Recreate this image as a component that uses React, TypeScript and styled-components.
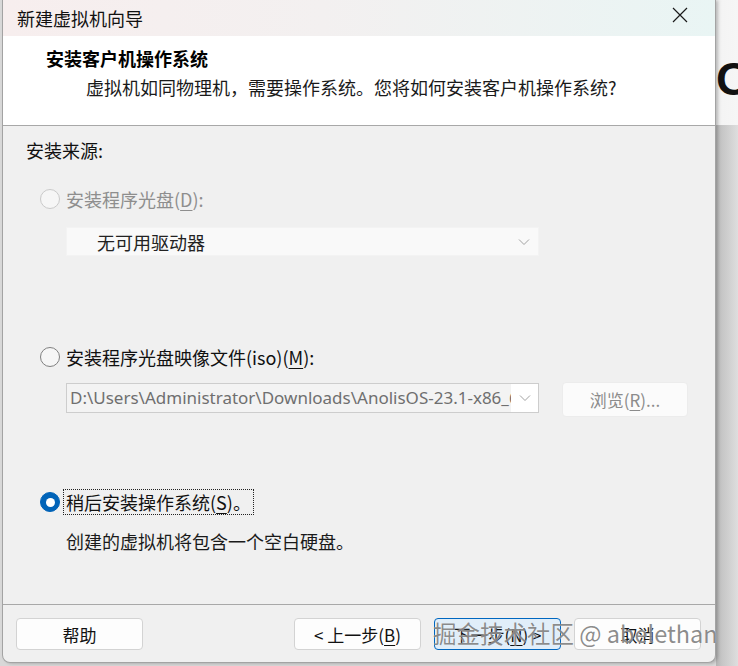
import React from "react";
import styled, { createGlobalStyle } from "styled-components";

const Global = createGlobalStyle`
  html, body { margin: 0; padding: 0; }
  body {
    width: 738px; height: 666px; overflow: hidden; background: #d6d6d6;
    font-family: "Noto Sans CJK SC", "Noto Sans", sans-serif;
  }
`;

const Desktop = styled.div`
  display: flex;
  width: 738px;
  height: 666px;
  overflow: hidden;
  position: relative;
  background: #d8d8d8;
`;

const Window = styled.div`
  position: relative;
  flex: none;
  width: 714px;
  height: 663px;
  margin-left: 2px;
  box-sizing: border-box;
  border: 1px solid #a3a3a3;
  border-top: none;
  border-radius: 0 0 8px 8px;
  display: flex;
  flex-direction: column;
  overflow: hidden;
  background: #f0f0f0;
  box-shadow: 2px 1px 3px rgba(0, 0, 0, 0.18);
  z-index: 1;
`;

const TitleBar = styled.div`
  height: 36px;
  flex: none;
  display: flex;
  align-items: center;
  padding-left: 14px;
  background: linear-gradient(90deg, #f7eeee 0%, #f3f0f0 45%, #e9f5f4 100%);
  font-size: 18px;
  color: #111;
`;

const TitleText = styled.div`
  flex: 1;
  line-height: 36px;
`;

const CloseButton = styled.div`
  width: 46px;
  height: 30px;
  margin-right: 12px;
  display: flex;
  align-items: center;
  justify-content: center;
  margin-top: -6px;
`;

const Header = styled.div`
  height: 90px;
  flex: none;
  box-sizing: border-box;
  background: #ffffff;
  border-bottom: 1px solid #a8a8a8;
  padding: 9px 0 0 43px;
`;

const HeaderTitle = styled.div`
  font-size: 18px;
  font-weight: 700;
  line-height: 26px;
  color: #000;
`;

const HeaderSub = styled.div`
  font-size: 18px;
  line-height: 26px;
  margin: 3px 0 0 40px;
  color: #1a1a1a;
`;

const Body = styled.div`
  flex: 1;
  padding: 12px 0 0 23px;
  display: flex;
  flex-direction: column;
  align-items: flex-start;
`;

const SectionLabel = styled.div`
  font-size: 18px;
  line-height: 24px;
  color: #111;
`;

const RadioRow = styled.div<{ $top: number }>`
  display: flex;
  align-items: center;
  gap: 6px;
  margin: ${(p) => p.$top}px 0 0 14px;
  height: 24px;
`;

const RadioCircle = styled.div<{ $state: "disabled" | "off" | "on" }>`
  width: 20px;
  height: 20px;
  box-sizing: border-box;
  border-radius: 50%;
  display: flex;
  align-items: center;
  justify-content: center;
  border: 1px solid
    ${(p) => (p.$state === "disabled" ? "#cacaca" : p.$state === "off" ? "#808080" : "#0063b8")};
  background: ${(p) => (p.$state === "on" ? "#0063b8" : "#f6f6f6")};
  &::after {
    content: "";
    display: ${(p) => (p.$state === "on" ? "block" : "none")};
    width: 9px;
    height: 9px;
    border-radius: 50%;
    background: #fff;
  }
`;

const RadioLabel = styled.div<{ $disabled?: boolean; $focused?: boolean }>`
  font-size: 18px;
  line-height: 24px;
  color: ${(p) => (p.$disabled ? "#8e8e8e" : "#111")};
  padding: 0 2px;
  margin-left: -2px;
  outline: ${(p) => (p.$focused ? "1px dotted #222" : "none")};
  outline-offset: 0;
  u {
    text-underline-offset: 3px;
  }
`;

const SelectBox = styled.div`
  margin: 16px 0 0 40px;
  width: 473px;
  height: 29px;
  box-sizing: border-box;
  background: #f9f9f9;
  border: 1px solid #f3f3f3;
  display: flex;
  align-items: center;
  padding: 0 8px 0 30px;
  font-size: 18px;
  color: #222;
`;

const SelectText = styled.div`
  flex: 1;
`;

const InputRow = styled.div`
  margin: 13px 0 0 40px;
  height: 35px;
  display: flex;
  align-items: center;
  gap: 23px;
`;

const PathCombo = styled.div`
  width: 473px;
  height: 30px;
  box-sizing: border-box;
  border: 1px solid #cdcdcd;
  background: #f3f3f3;
  display: flex;
  align-items: stretch;
  margin-top: -3px;
`;

const PathText = styled.div`
  flex: 1;
  overflow: hidden;
  white-space: nowrap;
  padding-left: 3px;
  font-family: "Noto Sans", "Open Sans", sans-serif;
  font-size: 17px;
  line-height: 28px;
  color: #6f6f6f;
`;

const ChevronBox = styled.div<{ $bg?: string }>`
  width: 27px;
  flex: none;
  display: flex;
  align-items: center;
  justify-content: center;
  background: ${(p) => p.$bg || "transparent"};
`;

const BrowseButton = styled.div`
  width: 126px;
  height: 35px;
  box-sizing: border-box;
  border: 1px solid #ececec;
  border-radius: 4px;
  background: #fbfbfb;
  display: flex;
  align-items: center;
  justify-content: center;
  font-size: 17px;
  color: #8c8c8c;
  u {
    text-underline-offset: 3px;
  }
`;

const Description = styled.div`
  margin: 15px 0 0 40px;
  font-size: 18px;
  line-height: 24px;
  color: #1a1a1a;
`;

const Footer = styled.div`
  height: 58px;
  flex: none;
  box-sizing: border-box;
  border-top: 1px solid #a8a8a8;
  padding: 13px 14px 0 13px;
  display: flex;
  align-items: flex-start;
`;

const Spacer = styled.div`
  flex: 1;
`;

const ButtonGroup = styled.div`
  display: flex;
  gap: 13px;
`;

const Button = styled.div<{ $primary?: boolean }>`
  width: 127px;
  height: 32px;
  box-sizing: border-box;
  border-radius: 4px;
  border: 1px solid ${(p) => (p.$primary ? "#0067c0" : "#d3d3d3")};
  background: ${(p) => (p.$primary ? "#e1eef9" : "#fdfdfd")};
  display: flex;
  align-items: center;
  justify-content: center;
  font-size: 17px;
  color: #111;
  u {
    text-underline-offset: 3px;
  }
`;

const Watermark = styled.div`
  position: absolute;
  left: 433px;
  top: 617px;
  font-family: "Noto Sans CJK SC", "Noto Sans", sans-serif;
  font-size: 23.5px;
  line-height: 32px;
  color: rgba(95, 95, 95, 0.72);
  text-shadow: 0 0 1px rgba(255, 255, 255, 0.9);
  white-space: nowrap;
  letter-spacing: 0;
  z-index: 3;
  pointer-events: none;
`;

const SideStrip = styled.div`
  flex: 1;
  display: flex;
  flex-direction: column;
  overflow: hidden;
`;

const SideTop = styled.div`
  height: 125px;
  flex: none;
  background: linear-gradient(90deg, #e4e4e4 0px, #f4f4f4 6px, #f6f6f6 100%);
  overflow: hidden;
`;

const BigLetter = styled.div`
  font-family: "Liberation Sans", Arial, sans-serif;
  font-weight: 700;
  font-size: 46px;
  line-height: 46px;
  margin: 56px 0 0 0;
  color: #111;
`;

const SideBottom = styled.div`
  flex: 1;
  background: linear-gradient(90deg, #b4b4b4 0px, #c6c6c6 6px, #dedede 100%);
`;

const Chevron = () => (
  <svg width="12" height="8" viewBox="0 0 12 8">
    <path d="M1 1.5 L6 6.5 L11 1.5" fill="none" stroke="#a2a2a2" strokeWidth="1" />
  </svg>
);

const CloseIcon = () => (
  <svg width="16" height="16" viewBox="0 0 16 16">
    <path d="M1 1 L15 15 M15 1 L1 15" stroke="#1a1a1a" strokeWidth="1.2" fill="none" />
  </svg>
);

export default function App() {
  return (
    <>
      <Global />
      <Desktop>
        <Window>
          <TitleBar>
            <TitleText>新建虚拟机向导</TitleText>
            <CloseButton>
              <CloseIcon />
            </CloseButton>
          </TitleBar>
          <Header>
            <HeaderTitle>安装客户机操作系统</HeaderTitle>
            <HeaderSub>虚拟机如同物理机，需要操作系统。您将如何安装客户机操作系统?</HeaderSub>
          </Header>
          <Body>
            <SectionLabel>安装来源:</SectionLabel>
            <RadioRow $top={25}>
              <RadioCircle $state="disabled" />
              <RadioLabel $disabled>
                安装程序光盘(<u>D</u>):
              </RadioLabel>
            </RadioRow>
            <SelectBox>
              <SelectText>无可用驱动器</SelectText>
              <Chevron />
            </SelectBox>
            <RadioRow $top={89}>
              <RadioCircle $state="off" />
              <RadioLabel>
                安装程序光盘映像文件(iso)(<u>M</u>):
              </RadioLabel>
            </RadioRow>
            <InputRow>
              <PathCombo>
                <PathText>D:\Users\Administrator\Downloads\AnolisOS-23.1-x86_64-dvd.iso</PathText>
                <ChevronBox $bg="#ffffff">
                  <Chevron />
                </ChevronBox>
              </PathCombo>
              <BrowseButton>
                浏览(<u>R</u>)...
              </BrowseButton>
            </InputRow>
            <RadioRow $top={73}>
              <RadioCircle $state="on" />
              <RadioLabel $focused>
                稍后安装操作系统(<u>S</u>)。
              </RadioLabel>
            </RadioRow>
            <Description>创建的虚拟机将包含一个空白硬盘。</Description>
          </Body>
          <Footer>
            <Button>帮助</Button>
            <Spacer />
            <ButtonGroup>
              <Button>
                &lt; 上一步(<u>B</u>)
              </Button>
              <Button $primary>
                下一步(<u>N</u>) &gt;
              </Button>
              <Button>取消</Button>
            </ButtonGroup>
          </Footer>
        </Window>
        <SideStrip>
          <SideTop>
            <BigLetter>O</BigLetter>
          </SideTop>
          <SideBottom />
        </SideStrip>
        <Watermark>掘金技术社区 @ abelethan</Watermark>
      </Desktop>
    </>
  );
}
